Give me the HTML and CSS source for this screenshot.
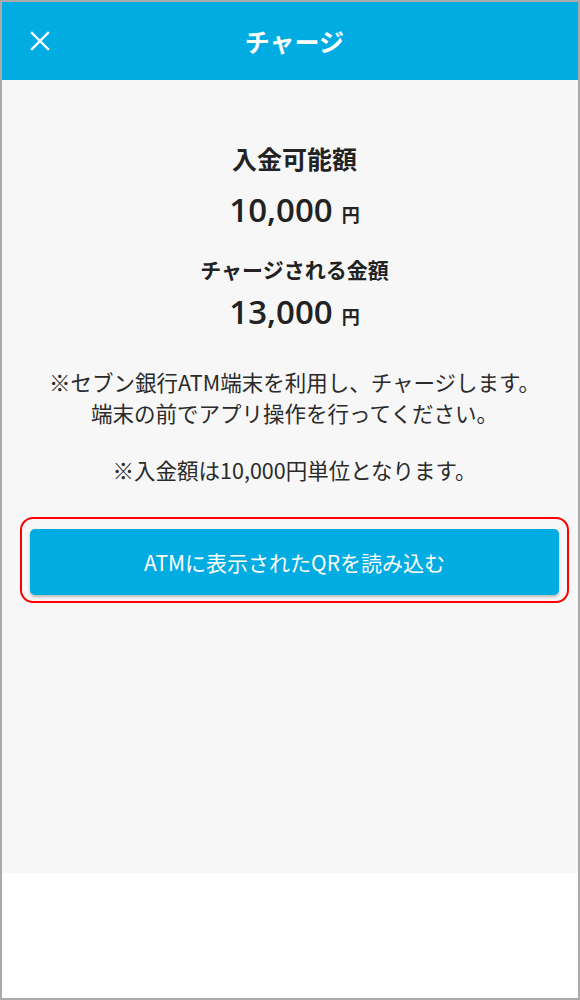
FILE: index.html
```html
<!DOCTYPE html>
<html lang="ja">
<head>
  <meta charset="UTF-8" />
  <meta name="viewport" content="width=device-width, initial-scale=1.0">
  <title>チャージ</title>
  <link rel="stylesheet" href="styles.css">
</head>
<body>
  <div class="tela">
    <header class="topo">
      <button class="fechar" aria-label="閉じる">
        <svg width="20" height="20" viewBox="0 0 20 20">
          <path d="M2 2 L18 18 M18 2 L2 18" stroke="#fff" stroke-width="2.4" fill="none" stroke-linecap="square" />
        </svg>
      </button>
      <h1>チャージ</h1>
      <span></span>
    </header>

    <main class="conteudo">
      <h2 class="rotulo">入金可能額</h2>
      <div class="valor">10,000<span class="moeda">円</span></div>

      <h3 class="rotulo-menor">チャージされる金額</h3>
      <div class="valor">13,000<span class="moeda">円</span></div>

      <p class="aviso">※セブン銀行ATM端末を利用し、チャージします。<br>端末の前でアプリ操作を行ってください。</p>
      <p class="aviso aviso-unidade">※入金額は10,000円単位となります。</p>

      <div class="destaque">
        <button class="botao">ATMに表示されたQRを読み込む</button>
      </div>
    </main>
  </div>
</body>
</html>
```

FILE: styles.css
```css
* {
  box-sizing: border-box;
  margin: 0;
  padding: 0;
}

body {
  font-family: "Noto Sans CJK JP", "Noto Sans", sans-serif;
  background-color: #ffffff;
  color: #222222;
}

.tela {
  height: 1000px;
  border: 2px solid #aaaaaa;
  background-color: #ffffff;
}

.topo {
  height: 78px;
  background-color: #00ace2;
  display: grid;
  grid-template-columns: 1fr auto 1fr;
  align-items: center;
  padding-left: 9px;
  color: #ffffff;
}

.fechar {
  justify-self: start;
  margin-left: 19px;
  width: 20px;
  height: 20px;
  background: none;
  border: none;
  display: flex;
}

.topo h1 {
  font-size: 25px;
  font-weight: 700;
  line-height: 1;
}

.conteudo {
  height: 793px;
  background-color: #f7f7f7;
  padding: 60px 0 0 9px;
  text-align: center;
}

.rotulo {
  font-size: 25px;
  font-weight: 700;
  line-height: 36px;
}

.valor {
  margin-top: 12px;
  font-family: "Open Sans", "Noto Sans CJK JP", sans-serif;
  font-size: 33px;
  font-weight: 600;
  line-height: 44px;
  height: 44px;
}

.rotulo-menor + .valor {
  margin-top: 6px;
}

.moeda {
  font-family: "Noto Sans CJK JP", sans-serif;
  font-size: 18px;
  font-weight: 700;
  line-height: 1;
  margin-left: 9px;
}

.rotulo-menor {
  margin-top: 22px;
  font-size: 21px;
  font-weight: 700;
  line-height: 30px;
}

.aviso {
  margin-top: 32px;
  font-size: 21.5px;
  line-height: 31px;
  color: #2a2a2a;
}

.aviso-unidade {
  margin-top: 26px;
}

/* moldura vermelha em volta do botão */
.destaque {
  margin: 32px 9px 0 9px;
  padding: 10px 8px 6px 8px;
  border: 2.5px solid #ff0000;
  border-radius: 13px;
}

.botao {
  width: 100%;
  height: 66px;
  background-color: #00ace2;
  color: #ffffff;
  font-family: "Noto Sans CJK JP", "Noto Sans", sans-serif;
  font-size: 21px;
  border: none;
  border-radius: 5px;
  box-shadow: 0 2px 3px rgba(0, 0, 0, 0.25);
  cursor: pointer;
}
```
